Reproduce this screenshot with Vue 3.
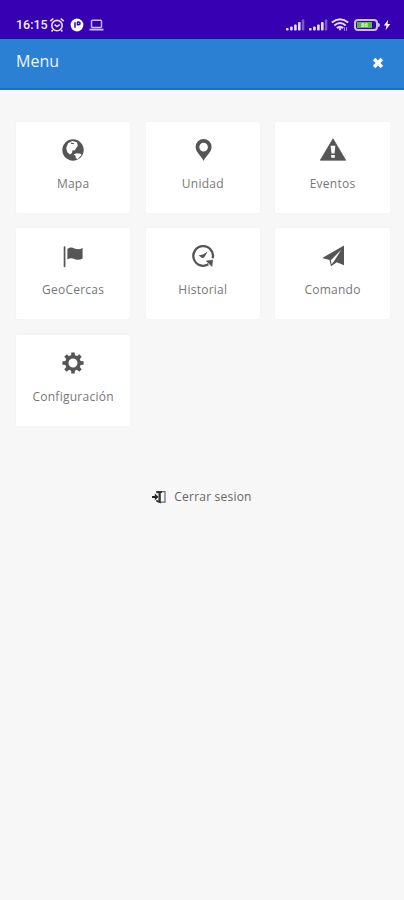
<script setup>
const items = [
  { id: 'map', label: 'Mapa' },
  { id: 'pin', label: 'Unidad' },
  { id: 'alert', label: 'Eventos' },
  { id: 'flag', label: 'GeoCercas' },
  { id: 'history', label: 'Historial' },
  { id: 'send', label: 'Comando' },
  { id: 'gear', label: 'Configuración' },
]
const teeth = [0, 45, 90, 135, 180, 225, 270, 315]
</script>

<template>
  <main class="screen">
    <div class="status">
      <span class="time">16:15</span>
      <svg class="alarm" width="16" height="16" viewBox="0 0 16 16" fill="none" stroke="currentColor" stroke-width="1.6">
        <circle cx="8" cy="8.6" r="5.2" />
        <path d="M1.3 4.1 4.3 1.5M14.7 4.1 11.7 1.5M3.8 13 2.6 14.5M12.2 13l1.2 1.5M5.6 7.6 8 9.6l2.8-2" />
      </svg>
      <svg class="pbadge" width="14" height="14" viewBox="0 0 14 14">
        <circle cx="7" cy="7" r="6.4" fill="currentColor" />
        <path d="M5 9.8V4.2M7.2 3.9h1.4a1.4 1.4 0 0 1 0 2.9H7.5V4" fill="none" stroke="#3700b3" stroke-width="1.5" />
      </svg>
      <svg class="laptop" width="15" height="12" viewBox="0 0 15 12" fill="none" stroke="currentColor">
        <rect x="2.5" y="1.2" width="10" height="7.3" rx="1" stroke-width="1.4" />
        <path d="M.5 10.6h14" stroke-width="1.8" />
      </svg>
      <span class="grow"></span>
      <svg v-for="n in 2" :key="n" class="signal" width="19" height="12" viewBox="0 0 19 12" fill="currentColor">
        <rect x="0" y="9" width="2.6" height="2.5" rx=".8" />
        <rect x="4.1" y="7.5" width="2.6" height="4" rx=".8" />
        <rect x="8.1" y="5.5" width="2.6" height="6" rx=".8" />
        <rect x="12" y="3" width="2.6" height="8.5" rx=".8" />
        <rect x="15.8" y=".5" width="2.5" height="11" rx=".8" opacity=".4" />
      </svg>
      <svg class="wifi" width="18" height="14" viewBox="0 0 18 14" fill="none" stroke="currentColor" stroke-width="1.9">
        <path d="M.8 4.6Q9-2.2 17.2 4.6M3.3 7.4Q9 2.8 14.7 7.4M5.8 10Q9 7.4 12.2 10" />
        <path d="m7.2 10.6 1.8 2.2 1.8-2.2Q9 9.2 7.2 10.6Z" fill="currentColor" stroke="none" />
        <path d="M13.4 9.3v3.5m2.2-3.5v3.5" stroke-width="1" opacity=".7" />
      </svg>
      <span class="battery"><span class="charge">86</span></span>
      <svg class="bolt" width="8" height="12" viewBox="0 0 8 12"><path d="M5.2.8.8 6.5h2.7L2.5 11.2 7.3 5.1H4.5Z" fill="currentColor" /></svg>
    </div>

    <header class="header">
      <h1>Menu</h1>
      <svg width="12" height="12" viewBox="0 0 12 12"><path d="m2.1 2.1 7.8 7.8m0-7.8L2.1 9.9" stroke="currentColor" stroke-width="3.5" /></svg>
    </header>

    <nav class="grid">
      <a v-for="item in items" :key="item.id" class="card">
        <svg class="icon" width="28" height="24" viewBox="-14 -12 28 24" fill="currentColor">
          <template v-if="item.id === 'map'">
            <circle r="10.7" />
            <path d="M-4.9-6.8-.8-9 4-7.8 4.8-4.2 3-1.8 1.8.2-.6.6-1 3-3 4.4-5.7 2.2-6.8-2Z" fill="#fff" />
            <path d="M.6 4.4 3.5 3.2 7.7 3.7 8.6 5.1 4.7 8.9 2.8 8.3 2.5 5.7Z" fill="#fff" />
            <path d="M-2.5-7.4 1.3-6.8 1-5.9-1.7-6.1Z" />
          </template>
          <path v-else-if="item.id === 'pin'" fill-rule="evenodd" transform="translate(.6 0)" d="M0 11C-1.2 7.2-8 2.3-8-3A8 8 0 0 1 8-3C8 2.3 1.2 7.2 0 11ZM0-7.2A4.3 4.3 0 1 0 0 1.4 4.3 4.3 0 0 0 0-7.2Z" />
          <template v-else-if="item.id === 'alert'">
            <path d="M0-11.2 12.7 10.2H-12.7Z" stroke="currentColor" stroke-width=".8" stroke-linejoin="round" />
            <path d="M-2.4-4.2h4.8L1.5 3.6h-3ZM-1.8 5h3.6v2.8h-3.6Z" fill="#fff" />
          </template>
          <template v-else-if="item.id === 'flag'">
            <rect x="-9.3" y="-9.8" width="1.7" height="21" rx=".6" />
            <path d="M-5.6-7.1C-3.4-8.6-1.2-8.8 1.3-7.6 4-6.4 6.6-6.5 9.6-8V2.5C6.8 4.1 4 4.3 1.3 3-1.2 1.9-3.4 2.1-5.6 3.5Z" />
          </template>
          <template v-else-if="item.id === 'history'">
            <path d="M9.7 2.2A9.8 9.8 0 1 0 5.3 8.3" fill="none" stroke="currentColor" stroke-width="2.3" />
            <path d="M2.7 4.8 10 3.7 9.2 11Z" />
            <path d="M-4.5-.6 0-1.5 4.7-4.5 1.2 1.6-.7 2Z" />
          </template>
          <template v-else-if="item.id === 'send'">
            <path d="M11-10.5V9.2L3.8 6.2-2 10.2-3.5 4-10.8 2Z" />
            <path d="M8.2-6.2-2.2 4.3-1.5 8.3 1 5.2Z" fill="#fff" />
          </template>
          <template v-else>
            <path v-for="angle in teeth" :key="angle" d="M-2-6-1.7-10.6H1.7L2-6Z" :transform="`rotate(${angle})`" />
            <circle r="6.2" fill="none" stroke="currentColor" stroke-width="3.4" />
          </template>
        </svg>
        <span class="label">{{ item.label }}</span>
      </a>
    </nav>

    <a class="logout">
      <svg width="15" height="14" viewBox="0 0 15 14">
        <path d="M5.3 2.2V1.6H13v10.6H8" fill="none" stroke="#666" stroke-width="1.2" />
        <path d="M4.3 3.2V1L10 1.2v1.7H8.8v10.7L4.3 11.8V9.7l2.2.8V3.2Z" fill="#333" />
        <path d="M0 6h2.8V3.6L6.6 7 2.8 10.3V8H0Z" fill="#222" />
      </svg>
      <span>Cerrar sesion</span>
    </a>
  </main>
</template>

<style>
body { background: #f7f7f7; }
</style>

<style scoped>
.screen { min-height: 900px; background: #f7f7f7; font-family: "Open Sans", "Noto Sans", sans-serif; color: #555; }
.status { height: 39px; box-sizing: border-box; padding: 10px 13px 0 16px; display: flex; align-items: center; background: #3700b3; color: #e8dcfa; }
.time { width: 32px; font: 500 12.5px/18px Roboto, "Noto Sans", sans-serif; color: #f2eaff; white-space: nowrap; }
.alarm { margin-left: 1px; }
.pbadge { margin-left: 5px; color: #fff; }
.laptop { margin-left: 5px; color: #cebcf2; }
.grow { flex: 1; }
.signal { margin-right: 3.5px; }
.wifi { margin-right: 5px; }
.battery { position: relative; width: 24px; height: 12px; box-sizing: border-box; border: 2px solid #cfbdf0; border-radius: 4px; padding: 1px; display: flex; }
.battery::after { content: ""; position: absolute; right: -4px; top: 2px; width: 2px; height: 4px; border-radius: 0 2px 2px 0; background: #cfbdf0; }
.charge { width: 15px; background: #58b746; color: #e9f8df; font-size: 6px; font-weight: 700; line-height: 6px; text-align: center; }
.bolt { margin-left: 5px; color: #fff; }
.header { height: 51px; box-sizing: border-box; padding: 0 20px 5px 16px; display: flex; align-items: center; justify-content: space-between; background: #2b80d3; border-bottom: 2px solid #1270c8; color: #fff; }
.header h1 { margin: 0; font-size: 16px; line-height: 22px; font-weight: 400; color: #edf6ff; }
.header svg { margin-top: 4px; }
.grid { padding: 32px 14.35px 0 16px; display: grid; grid-template-columns: repeat(3, 114.25px); justify-content: space-between; row-gap: 15.4px; }
.card { height: 91px; box-sizing: border-box; padding-top: 15.8px; display: flex; flex-direction: column; align-items: center; background: #fff; border-radius: 2px; box-shadow: 0 0 3px rgba(0, 0, 0, .035); }
.icon { color: #555; }
.label { margin-top: 13px; font-size: 12px; line-height: 18px; letter-spacing: .25px; color: #777; white-space: nowrap; }
.logout { margin-top: 62px; display: flex; align-items: center; justify-content: center; gap: 7px; font-size: 12px; line-height: 18px; letter-spacing: .22px; color: #666; }
</style>
